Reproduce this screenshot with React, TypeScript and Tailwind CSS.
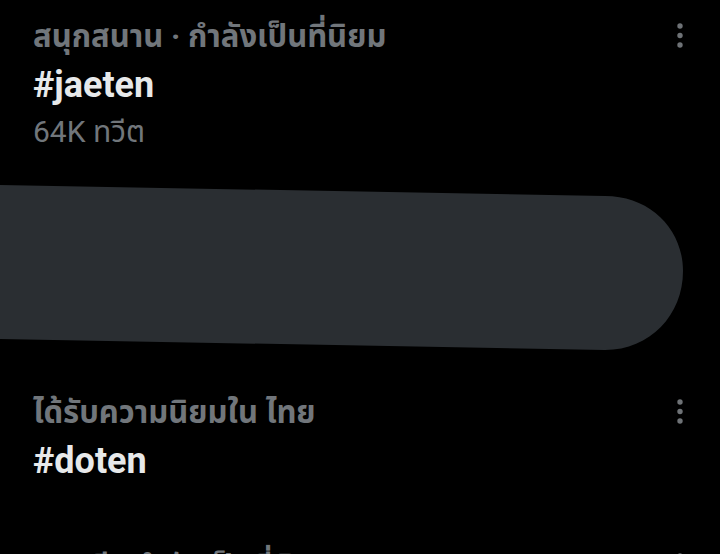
import React from 'react';

const MoreDots: React.FC = () => (
  <svg width="6" height="26" viewBox="0 0 6 26" className="shrink-0 mt-[9px]">
    <circle cx="3" cy="3" r="2.7" fill="#6e7276" />
    <circle cx="3" cy="12.5" r="2.7" fill="#6e7276" />
    <circle cx="3" cy="22" r="2.7" fill="#6e7276" />
  </svg>
);

type TrendProps = {
  category: string;
  tag: string;
  count?: string;
};

const Trend: React.FC<TrendProps> = ({ category, tag, count }) => (
  <div className="flex items-start justify-between pl-[33px] pr-[37px]">
    <div className="flex flex-col">
      <div className="text-[31px] leading-[46px] font-bold text-[#71767b] whitespace-nowrap">{category}</div>
      <div className="text-[36px] leading-[50px] font-bold text-[#e7e9ea]">{tag}</div>
      {count && <div className="text-[30px] leading-[44px] text-[#71767b]">{count}</div>}
    </div>
    <MoreDots />
  </div>
);

export default function App() {
  return (
    <div className="w-[720px] h-[554px] overflow-hidden bg-black font-['Roboto','Noto_Sans_Thai','Noto_Sans',sans-serif]">
      <div className="pt-[14px]">
        <Trend category="สนุกสนาน · กำลังเป็นที่นิยม" tag="#jaeten" count="64K ทวีต" />
      </div>

      {/* redacted scribble */}
      <svg width="720" height="166" viewBox="0 186 720 166" className="block mt-[31px]">
        <path
          d="M0,186 L605,197 C650,197 683,230 683,272 C683,316 650,351 605,351 L0,340 Z"
          fill="#2a2e32"
        />
      </svg>

      <div className="mt-[39px]">
        <Trend category="ได้รับความนิยมใน ไทย" tag="#doten" />
      </div>

      <div className="mt-[58px]">
        <Trend category="ดนตรี · กำลังเป็นที่นิยม" tag="#" />
      </div>
    </div>
  );
}
